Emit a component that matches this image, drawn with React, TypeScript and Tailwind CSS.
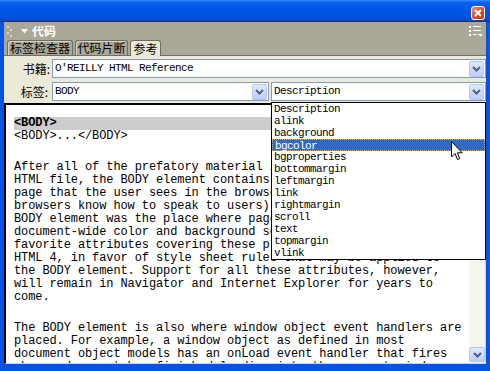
import React from 'react';

// lines under the open list are only shown as far as the list's left edge
const paraOne = [
  'After all of the prefatory material in',
  'HTML file, the BODY element contains t',
  'page that the user sees in the browser',
  'browsers know how to speak to users). ',
  'BODY element was the place where page ',
  'document-wide color and background sch',
  'favorite attributes covering these pro',
  'HTML 4, in favor of style sheet rules that may be applied to',
  'the BODY element. Support for all these attributes, however,',
  'will remain in Navigator and Internet Explorer for years to',
  'come.',
];

const paraTwo = [
  'The BODY element is also where window object event handlers are',
  'placed. For example, a window object as defined in most',
  'document object models has an onLoad event handler that fires',
  'when a document has finished loading into the current window',
];

const attributes = [
  'Description',
  'alink',
  'background',
  'bgcolor',
  'bgproperties',
  'bottommargin',
  'leftmargin',
  'link',
  'rightmargin',
  'scroll',
  'text',
  'topmargin',
  'vlink',
];

function Chevron() {
  return (
    <svg width="9" height="6" viewBox="0 0 9 6">
      <path d="M1 1 L4.5 4.5 L8 1" fill="none" stroke="#4d6185" strokeWidth="2" />
    </svg>
  );
}

function DropButton() {
  return (
    <div className="flex h-[16px] w-[15px] items-center justify-center rounded-[2px] border border-[#b4c6f3] bg-[linear-gradient(180deg,#e0e9fe,#bccff9)]">
      <Chevron />
    </div>
  );
}

function Select({ value, className }: { value: string; className: string }) {
  return (
    <div className={`flex h-[19px] items-center border border-[#7f9db9] bg-white pr-px pl-[2px] ${className}`}>
      <span className="flex-1 truncate font-['Liberation_Mono',monospace] text-[11px] tracking-[-0.6px] text-black">
        {value}
      </span>
      <DropButton />
    </div>
  );
}

function Cursor() {
  return (
    <svg className="absolute top-[141px] left-[451px]" width="13" height="20" viewBox="0 0 13 20">
      <path
        d="M0.5 0.5 L0.5 16 L4 12.5 L6.5 18.5 L8.8 17.5 L6.3 11.8 L11.2 11.8 Z"
        fill="#fff"
        stroke="#000"
        strokeWidth="1"
        strokeLinejoin="miter"
      />
    </svg>
  );
}

export default function App() {
  return (
    <div className="relative flex h-[371px] w-[490px] flex-col overflow-hidden bg-[#0553e3] font-['Noto_Sans_CJK_SC',sans-serif] select-none">
      {/* Title bar */}
      <div className="flex h-[22px] shrink-0 items-start justify-end border-b border-[#1b2f70] bg-[linear-gradient(180deg,#3d8ef7_0%,#0a5ff0_12%,#0055e5_50%,#0052dd_85%,#0a46c8_100%)] pt-[6px] pr-[5px]">
        <div className="flex h-[14px] w-[14px] items-center justify-center rounded-[3px] border border-white bg-[linear-gradient(135deg,#f08a6a,#e0491f_55%,#c43410)]">
          <svg width="8" height="8" viewBox="0 0 8 8">
            <path d="M1 1 L7 7 M7 1 L1 7" stroke="#fff" strokeWidth="2" />
          </svg>
        </div>
      </div>

      {/* Panel */}
      <div className="mx-[4px] flex min-h-0 flex-1 flex-col bg-[#ece9d8]">
        <div className="flex h-[34px] shrink-0 flex-col bg-[#aca899]">
          <div className="flex h-[18px] items-center">
            <div className="ml-[3px] grid grid-cols-2 gap-x-[1px] gap-y-[1px]">
              <span className="h-[2px] w-[2px] bg-[#d9d7cb]" />
              <span className="h-[2px] w-[2px]" />
              <span className="h-[2px] w-[2px]" />
              <span className="h-[2px] w-[2px] bg-[#d9d7cb]" />
              <span className="h-[2px] w-[2px] bg-[#d9d7cb]" />
              <span className="h-[2px] w-[2px]" />
              <span className="h-[2px] w-[2px]" />
              <span className="h-[2px] w-[2px] bg-[#d9d7cb]" />
            </div>
            <svg className="ml-[9px]" width="7" height="5" viewBox="0 0 7 5">
              <path d="M0 0 L7 0 L3.5 4.5 Z" fill="#fff" />
            </svg>
            <span className="ml-[4px] text-[12px] leading-none font-bold text-white">代码</span>
            <svg className="mr-[3px] ml-auto" width="14" height="11" viewBox="0 0 14 11">
              <rect x="0" y="0" width="2" height="2" fill="#fff" />
              <rect x="4" y="0" width="8" height="1" fill="#fff" />
              <rect x="0" y="4" width="2" height="2" fill="#fff" />
              <rect x="4" y="4" width="8" height="1" fill="#fff" />
              <rect x="0" y="8" width="2" height="2" fill="#fff" />
              <rect x="4" y="8" width="4" height="1" fill="#fff" />
              <path d="M9 8 L14 8 L11.5 10.5 Z" fill="#fff" />
            </svg>
          </div>
          <div className="flex h-[16px] items-end gap-[2px] border-b border-[#716f64] pl-[3px] text-[12px] leading-none text-black">
            <div className="flex h-[15px] w-[66px] items-center justify-center rounded-t-[3px] border border-b-0 border-[#6f6d60] bg-[#aca899] shadow-[inset_1px_1px_0_#d6d4c6]">
              标签检查器
            </div>
            <div className="flex h-[15px] w-[53px] items-center justify-center rounded-t-[3px] border border-b-0 border-[#6f6d60] bg-[#aca899] shadow-[inset_1px_1px_0_#d6d4c6]">
              代码片断
            </div>
            <div className="-mb-px flex h-[16px] w-[31px] items-center justify-center rounded-t-[3px] border border-b-0 border-[#6f6d60] bg-[#ece9d8]">
              参考
            </div>
          </div>
        </div>

        {/* Form rows */}
        <div className="flex shrink-0 flex-col gap-[4px] pt-[3px] text-[12px] text-black">
          <div className="flex items-center">
            <span className="w-[48px] pr-[2px] text-right leading-none">书籍:</span>
            <Select value="O'REILLY HTML Reference" className="flex-1" />
          </div>
          <div className="flex items-center gap-[2px]">
            <span className="w-[46px] pr-[2px] text-right leading-none">标签:</span>
            <Select value="BODY" className="w-[217px]" />
            <Select value="Description" className="flex-1" />
          </div>
        </div>

        {/* Reference content */}
        <div className="mt-[2px] flex min-h-0 flex-1 overflow-hidden border-t-2 border-r border-b border-l-2 border-t-black border-r-[#d4d0c8] border-b-[#d4d0c8] border-l-black bg-white">
          <div className="min-w-0 flex-1 overflow-hidden pt-[12px] pl-[8px] font-['Liberation_Mono',monospace] text-[12px] leading-[13px] tracking-[-0.1px] whitespace-pre text-black">
            <div className="bg-[#cccccc] font-bold">{'<BODY>'}</div>
            <div>{'<BODY>...</BODY>'}</div>
            <div className="mt-[18px]">
              {paraOne.map((line) => (
                <div key={line}>{line}</div>
              ))}
            </div>
            <div className="mt-[18px]">
              {paraTwo.map((line) => (
                <div key={line}>{line}</div>
              ))}
            </div>
          </div>
          <div className="flex w-[16px] shrink-0 flex-col bg-[#f6f5ee]">
            <div className="flex h-[16px] items-center justify-center rounded-[2px] border border-[#b4c6f3] bg-[linear-gradient(180deg,#e0e9fe,#bccff9)]">
              <svg width="9" height="6" viewBox="0 0 9 6">
                <path d="M1 5 L4.5 1.5 L8 5" fill="none" stroke="#4d6185" strokeWidth="2" />
              </svg>
            </div>
            <div className="h-[60px] rounded-[2px] border border-[#b4c6f3] bg-[#c6d5fb]" />
            <div className="flex-1" />
            <div className="mb-[1px] flex h-[15px] items-center justify-center rounded-[2px] border border-[#b4c6f3] bg-[linear-gradient(180deg,#e0e9fe,#bccff9)]">
              <Chevron />
            </div>
          </div>
        </div>
      </div>
      <div className="h-[7px] shrink-0" />

      {/* Open dropdown list */}
      <div className="absolute top-[102px] left-[271px] flex h-[158px] w-[215px] flex-col border border-black bg-white font-['Liberation_Mono',monospace] text-[11px] tracking-[-0.6px] text-black">
        {attributes.map((name) => (
          <div
            key={name}
            className={`h-[12px] pl-[2px] leading-[12px] ${
              name === 'bgcolor' ? 'border border-dotted border-[#e3b15a] bg-[#316ac5] leading-[10px] text-white' : ''
            }`}
          >
            {name}
          </div>
        ))}
      </div>

      <Cursor />
    </div>
  );
}
